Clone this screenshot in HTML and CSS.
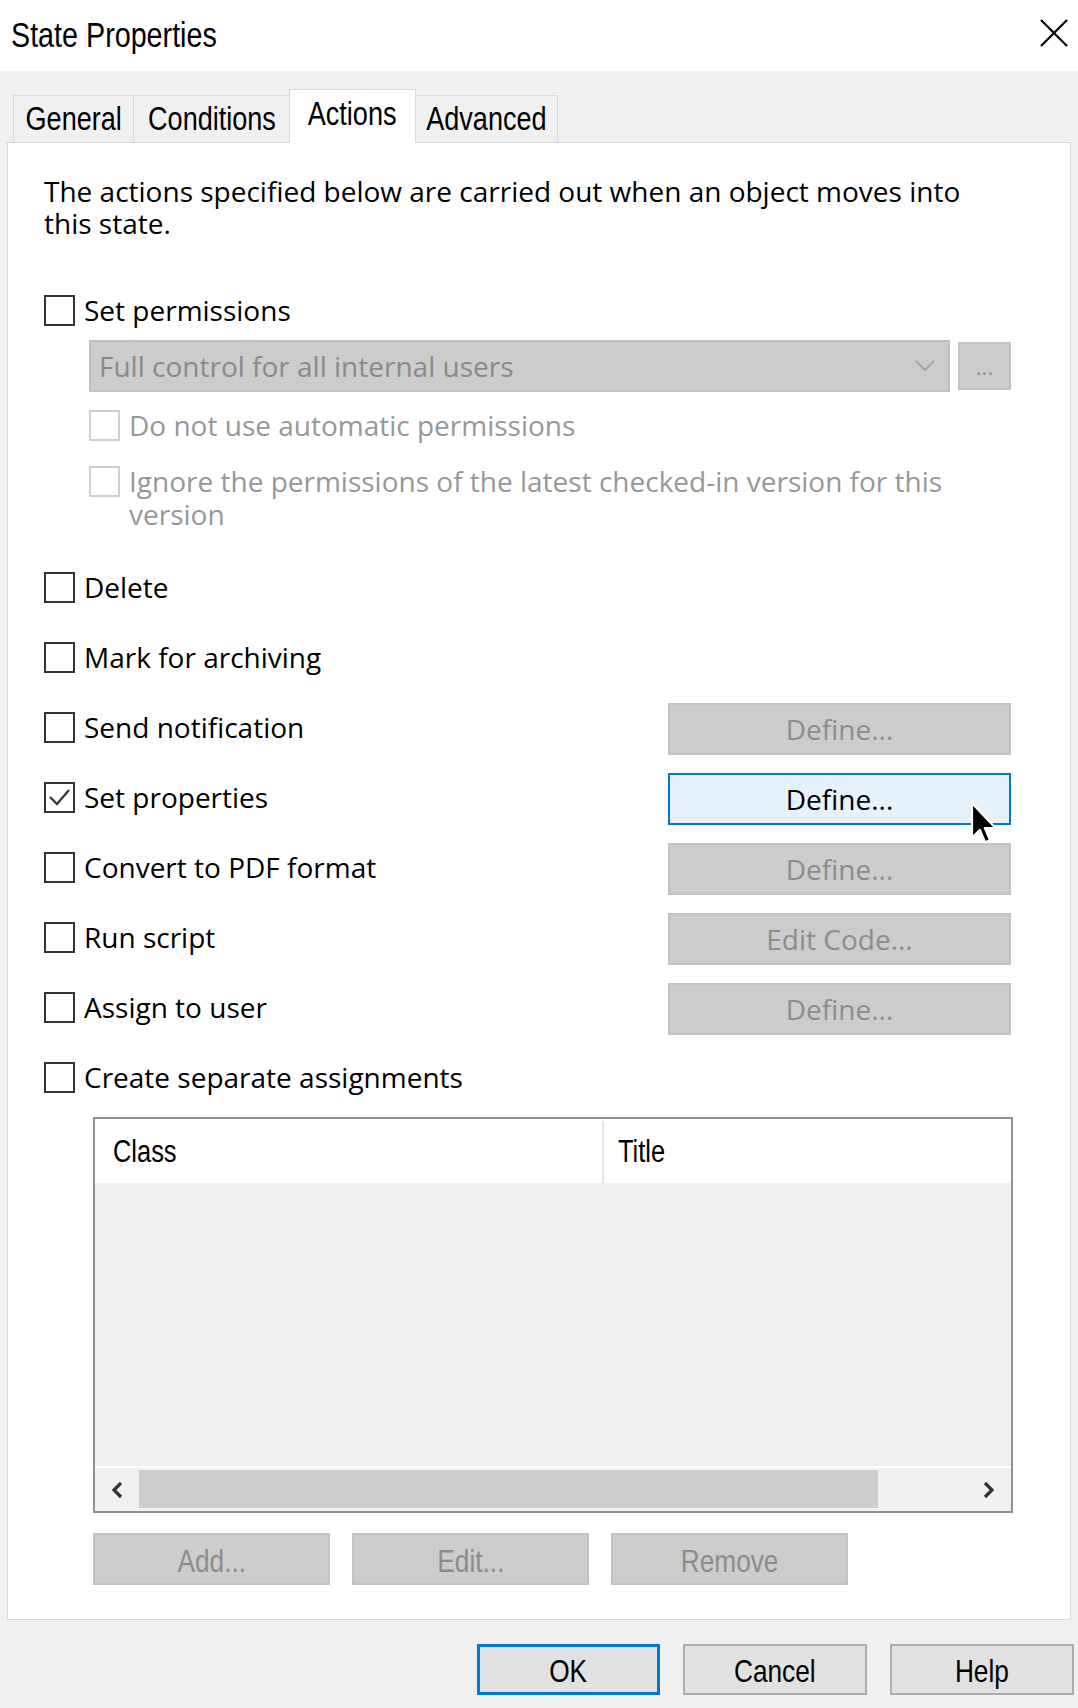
FILE: index.html
```html
<!DOCTYPE html>
<html lang="en">
<head>
  <meta charset="UTF-8">
  <meta name="viewport" content="width=device-width, initial-scale=1.0">
  <title>State Properties</title>
  <link rel="stylesheet" href="styles.css">
</head>
<body>
  <div class="titlebar">
    <span class="title narrow">State Properties</span>
    <svg class="close" width="28" height="28" viewBox="0 0 28 28">
      <path d="M1 1 L27 27 M27 1 L1 27" stroke="#000" stroke-width="2.2" fill="none"/>
    </svg>
  </div>

  <div class="content">
    <div class="tabs">
      <div class="tab tab-general"><span class="narrow">General</span></div>
      <div class="tab tab-conditions"><span class="narrow">Conditions</span></div>
      <div class="tab tab-actions active"><span class="narrow">Actions</span></div>
      <div class="tab tab-advanced"><span class="narrow">Advanced</span></div>
    </div>

    <div class="panel">
      <p class="intro">The actions specified below are carried out when an object moves into<br>this state.</p>

      <label class="check-row perm-row">
        <span class="box"></span>
        <span class="label">Set permissions</span>
      </label>

      <div class="perm-options">
        <div class="combo-row">
          <div class="combo">
            <span>Full control for all internal users</span>
            <svg width="20" height="12" viewBox="0 0 20 12">
              <path d="M1 1 L10 10 L19 1" stroke="#a3a3a3" stroke-width="2" fill="none"/>
            </svg>
          </div>
          <button class="btn btn-disabled btn-more">...</button>
        </div>

        <label class="check-row disabled opt-auto">
          <span class="box"></span>
          <span class="label">Do not use automatic permissions</span>
        </label>

        <label class="check-row disabled opt-ignore">
          <span class="box"></span>
          <span class="label">Ignore the permissions of the latest checked-in version for this<br>version</span>
        </label>
      </div>

      <div class="actions">
        <div class="action-row">
          <label class="check-row"><span class="box"></span><span class="label">Delete</span></label>
        </div>
        <div class="action-row">
          <label class="check-row"><span class="box"></span><span class="label">Mark for archiving</span></label>
        </div>
        <div class="action-row">
          <label class="check-row"><span class="box"></span><span class="label">Send notification</span></label>
          <button class="btn btn-disabled btn-define">Define...</button>
        </div>
        <div class="action-row">
          <label class="check-row">
            <span class="box checked">
              <svg width="27" height="27" viewBox="0 0 27 27">
                <path d="M4 13 L11 20 L23 6" stroke="#3a3a3a" stroke-width="2.4" fill="none"/>
              </svg>
            </span>
            <span class="label">Set properties</span>
          </label>
          <button class="btn btn-focus btn-define">Define...</button>
        </div>
        <div class="action-row">
          <label class="check-row"><span class="box"></span><span class="label">Convert to PDF format</span></label>
          <button class="btn btn-disabled btn-define">Define...</button>
        </div>
        <div class="action-row">
          <label class="check-row"><span class="box"></span><span class="label">Run script</span></label>
          <button class="btn btn-disabled btn-define">Edit Code...</button>
        </div>
        <div class="action-row">
          <label class="check-row"><span class="box"></span><span class="label">Assign to user</span></label>
          <button class="btn btn-disabled btn-define">Define...</button>
        </div>
        <div class="action-row">
          <label class="check-row"><span class="box"></span><span class="label">Create separate assignments</span></label>
        </div>
      </div>

      <div class="listview">
        <div class="list-head">
          <div class="col col-class"><span class="narrow">Class</span></div>
          <div class="col col-title"><span class="narrow">Title</span></div>
        </div>
        <div class="list-body"></div>
        <div class="hscroll">
          <span class="arrow">
            <svg width="14" height="18" viewBox="0 0 14 18"><path d="M11 2 L4 9 L11 16" stroke="#333" stroke-width="3.2" fill="none"/></svg>
          </span>
          <div class="track"><div class="thumb"></div></div>
          <span class="arrow">
            <svg width="14" height="18" viewBox="0 0 14 18"><path d="M3 2 L10 9 L3 16" stroke="#333" stroke-width="3.2" fill="none"/></svg>
          </span>
        </div>
      </div>

      <div class="list-buttons">
        <button class="btn btn-disabled btn-list"><span class="narrow">Add...</span></button>
        <button class="btn btn-disabled btn-list"><span class="narrow">Edit...</span></button>
        <button class="btn btn-disabled btn-list"><span class="narrow">Remove</span></button>
      </div>
    </div>

    <div class="footer">
      <button class="btn btn-dialog btn-ok"><span class="narrow">OK</span></button>
      <button class="btn btn-dialog"><span class="narrow">Cancel</span></button>
      <button class="btn btn-dialog"><span class="narrow">Help</span></button>
    </div>
  </div>

  <!-- mouse pointer over the focused Define button -->
  <svg class="pointer" width="29" height="46" viewBox="0 0 14 22">
    <path d="M1 1 L1 17.5 L4.8 13.8 L7.3 19.8 L9.6 18.8 L7.1 12.9 L12.3 12.9 Z" fill="#000" stroke="#fff" stroke-width="1" stroke-linejoin="round"/>
  </svg>
</body>
</html>
```

FILE: styles.css
```css
body {
  margin: 0;
  width: 1078px;
  height: 1708px;
  background-color: #f0f0f0;
  font-family: "Open Sans", "Noto Sans", sans-serif;
  color: #000;
  position: relative;
  overflow: hidden;
}

/* the dialog chrome uses a condensed face */
.narrow {
  display: inline-block;
  font-family: "Liberation Sans", Arial, sans-serif;
  transform: scaleX(0.82);
  white-space: nowrap;
}

.titlebar {
  height: 71px;
  background-color: #fff;
  display: flex;
  align-items: center;
  justify-content: space-between;
  padding: 0 10px 6px 11px;
  box-sizing: border-box;
}

.title {
  font-size: 35px;
  padding-top: 4px;
  transform-origin: left center;
}

.content {
  padding: 0 7px;
}

/* tabs */
.tabs {
  display: flex;
  align-items: flex-end;
  margin: 18px 0 0 6px;
  height: 53px;
}

.tab {
  height: 47px;
  box-sizing: border-box;
  border: 1px solid #d9d9d9;
  border-bottom: none;
  margin-right: -1px;
  display: flex;
  align-items: center;
  justify-content: center;
  font-size: 33px;
  background-color: #f0f0f0;
}

.tab-general { width: 121px; }
.tab-conditions { width: 157px; }
.tab-actions { width: 127px; }
.tab-advanced { width: 143px; }

.tab.active {
  height: 54px;
  background-color: #fff;
  position: relative;
  z-index: 1;
  margin-bottom: -1px;
  padding-bottom: 6px;
}

/* tab page */
.panel {
  background-color: #fff;
  border: 1px solid #d9d9d9;
  padding: 32px 59px 34px 36px;
  display: flex;
  flex-direction: column;
}

.intro {
  margin: 0;
  font-size: 28px;
  line-height: 32px;
}

.check-row {
  display: flex;
  align-items: center;
  gap: 9px;
  font-size: 28px;
}

.box {
  width: 31px;
  height: 31px;
  box-sizing: border-box;
  border: 2px solid #333;
  background-color: #fff;
  flex: none;
  display: flex;
  align-items: center;
  justify-content: center;
}

.perm-row {
  height: 34px;
  margin-top: 54px;
}

.perm-options {
  margin-left: 45px;
  display: flex;
  flex-direction: column;
}

.combo-row {
  display: flex;
  align-items: center;
  gap: 8px;
  margin-top: 13px;
}

.combo {
  width: 861px;
  height: 52px;
  box-sizing: border-box;
  background-color: #cccccc;
  border: 2px solid #c0c0c0;
  display: flex;
  align-items: center;
  justify-content: space-between;
  padding: 0 13px 0 8px;
  font-size: 28px;
  color: #8a8a8a;
}

.check-row.disabled {
  color: #979797;
}

.check-row.disabled .box {
  border-color: #cfcfcf;
}

.opt-auto {
  height: 32px;
  margin-top: 17px;
}

.opt-ignore {
  align-items: flex-start;
  margin-top: 25px;
}

.opt-ignore .label {
  line-height: 33px;
  margin-top: -1px;
}

/* action list */
.actions {
  display: flex;
  flex-direction: column;
  gap: 18px;
  margin-top: 30px;
}

.action-row {
  height: 52px;
  display: flex;
  align-items: center;
  justify-content: space-between;
}

.btn {
  font-family: "Open Sans", "Noto Sans", sans-serif;
  font-size: 28px;
  box-sizing: border-box;
  padding: 0;
  margin: 0;
  cursor: default;
}

.btn-disabled {
  background-color: #cccccc;
  border: 2px solid #c3c3c3;
  color: #8c8c8c;
}

.btn-define {
  width: 343px;
  height: 52px;
  margin-top: 3px;
}

.btn-more {
  width: 53px;
  height: 48px;
  line-height: 40px;
  font-size: 22px;
  color: #8f8f8f;
}

.btn-focus {
  background-color: #e5f1fb;
  border: 2px solid #0078d7;
  color: #000;
}

/* assignments list */
.listview {
  margin: 14px 0 0 49px;
  width: 920px;
  height: 396px;
  box-sizing: border-box;
  border: 2px solid #8f9295;
  display: flex;
  flex-direction: column;
  background-color: #f0f0f0;
}

.list-head {
  display: flex;
  height: 62px;
  background-color: #fff;
  border-top: 2px solid #fff;
}

.col {
  font-size: 31px;
  display: flex;
  align-items: center;
  padding-left: 18px;
  box-sizing: border-box;
}

.col .narrow {
  transform-origin: left center;
}

.col-class {
  width: 509px;
  border-right: 2px solid #e5e5e5;
}

.col-title {
  flex: 1;
  padding-left: 14px;
}

.list-body {
  flex: 1;
}

.hscroll {
  height: 45px;
  border-top: 2px solid #fff;
  box-sizing: border-box;
  display: flex;
  align-items: center;
}

.arrow {
  width: 44px;
  display: flex;
  justify-content: center;
}

.track {
  flex: 1;
  height: 100%;
  padding: 2px 0 3px;
  box-sizing: border-box;
}

.thumb {
  width: 739px;
  height: 100%;
  background-color: #cdcdcd;
}

.list-buttons {
  display: flex;
  gap: 22px;
  margin: 20px 0 0 49px;
}

.btn-list {
  width: 237px;
  height: 52px;
  font-size: 32px;
}

/* dialog buttons */
.footer {
  display: flex;
  justify-content: flex-end;
  gap: 23px;
  margin: 24px -3px 0 0;
}

.btn-dialog {
  width: 184px;
  height: 51px;
  font-size: 32px;
  background-color: #e1e1e1;
  border: 2px solid #adadad;
  color: #000;
}

.btn-ok {
  width: 183px;
  border: 3px solid #0078d7;
}

.pointer {
  position: absolute;
  left: 970px;
  top: 801px;
}
```
